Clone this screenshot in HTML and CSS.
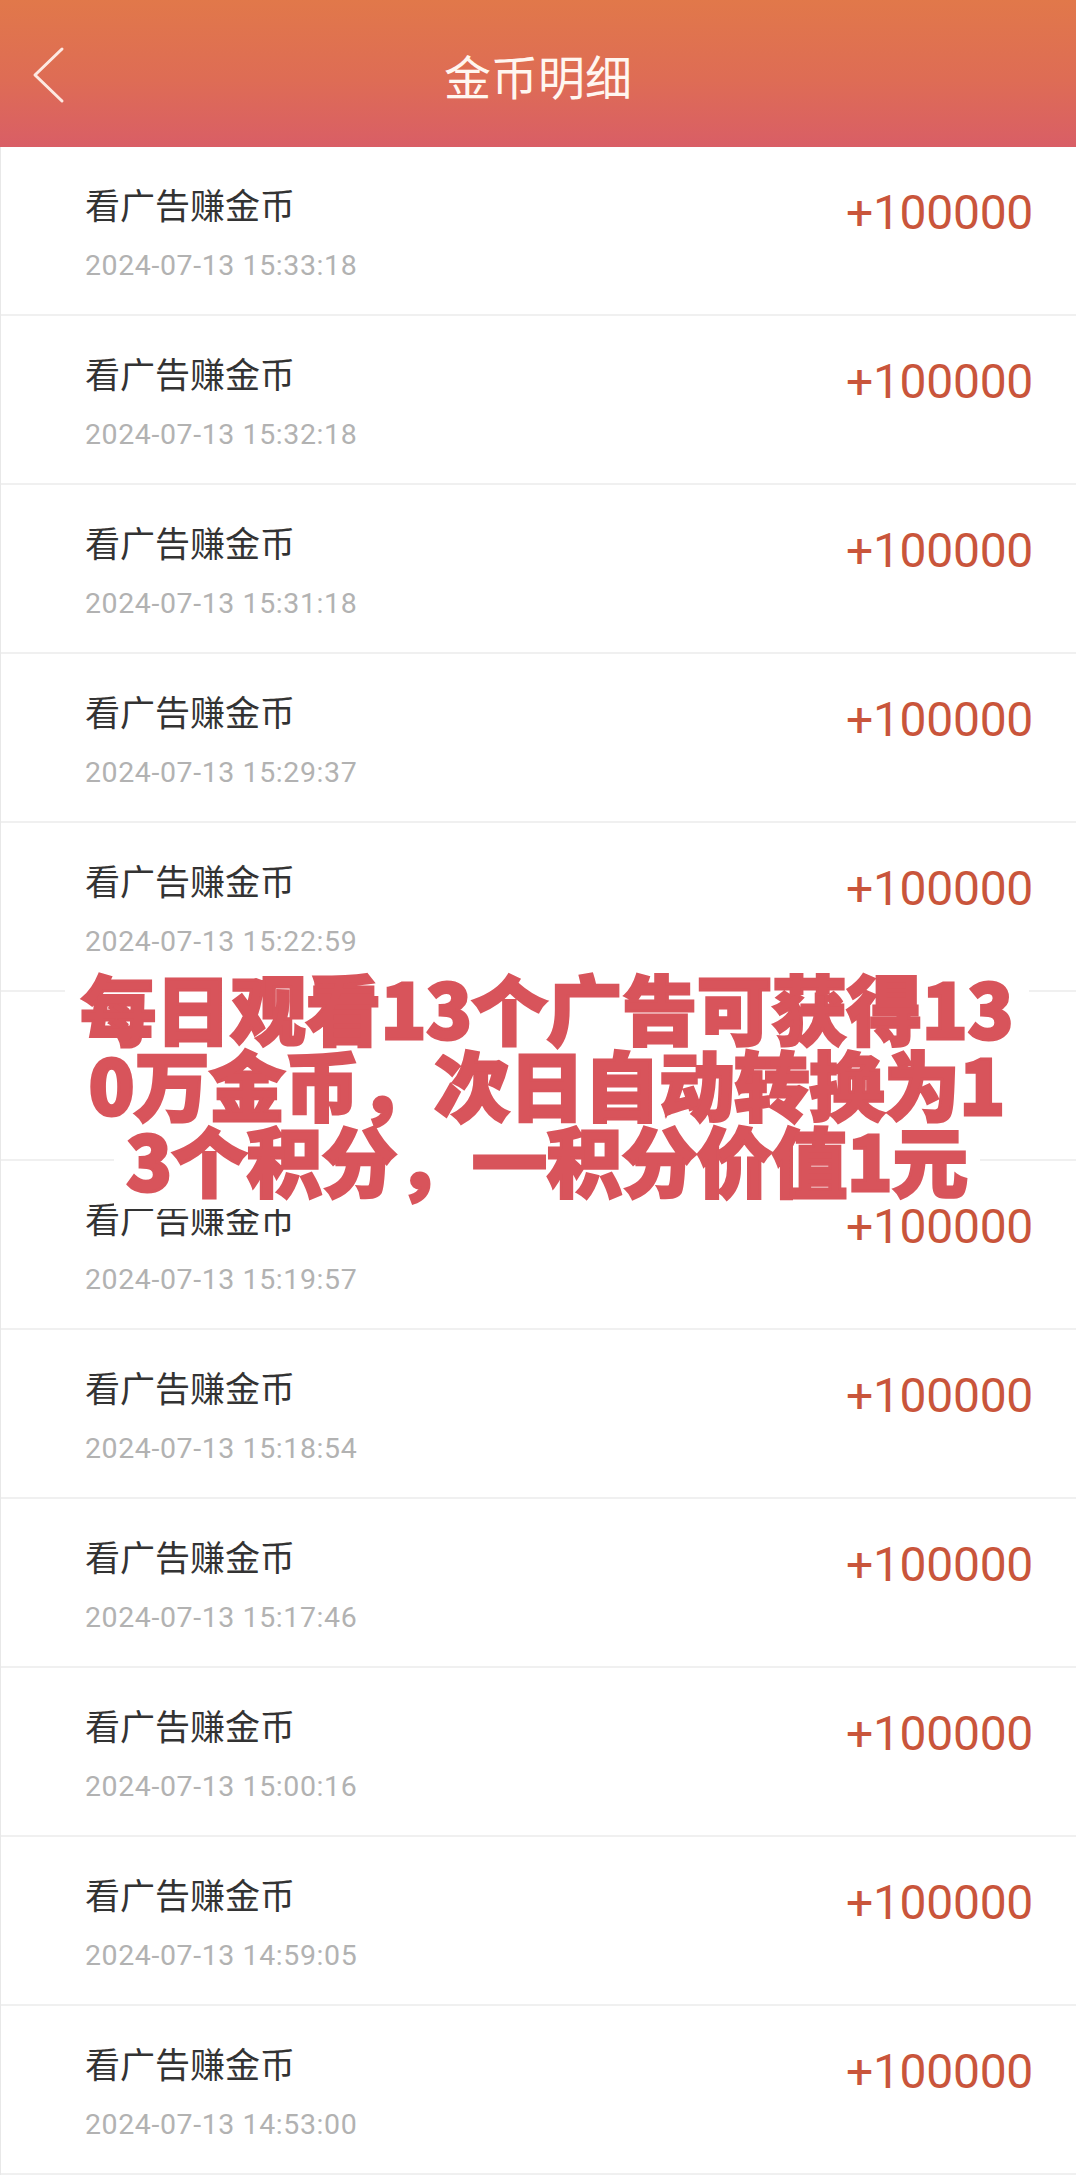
FILE: index.html
```html
<!DOCTYPE html>
<html lang="zh-CN">
<head>
    <meta charset="UTF-8">
    <meta name="viewport" content="width=device-width, initial-scale=1.0">
    <title>金币明细</title>
    <link rel="stylesheet" href="styles.css">
</head>
<body>
    <div class="page">
        <div class="top-bar">
            <div class="back">
                <svg width="34" height="60" viewBox="0 0 34 60">
                    <polyline points="30,4 3,30 30,56" fill="none" stroke="#fde9e2" stroke-width="3" stroke-linecap="round" stroke-linejoin="round"/>
                </svg>
            </div>
            <div class="title">金币明细</div>
            <div></div>
        </div>

        <div class="list">
            <div class="row">
                <div class="left"><div class="name">看广告赚金币</div><div class="time">2024-07-13 15:33:18</div></div>
                <div class="amount">+100000</div>
            </div>
            <div class="row">
                <div class="left"><div class="name">看广告赚金币</div><div class="time">2024-07-13 15:32:18</div></div>
                <div class="amount">+100000</div>
            </div>
            <div class="row">
                <div class="left"><div class="name">看广告赚金币</div><div class="time">2024-07-13 15:31:18</div></div>
                <div class="amount">+100000</div>
            </div>
            <div class="row">
                <div class="left"><div class="name">看广告赚金币</div><div class="time">2024-07-13 15:29:37</div></div>
                <div class="amount">+100000</div>
            </div>
            <div class="row">
                <div class="left"><div class="name">看广告赚金币</div><div class="time">2024-07-13 15:22:59</div></div>
                <div class="amount">+100000</div>
            </div>
            <div class="row">
                <div class="left"><div class="name">看广告赚金币</div><div class="time">2024-07-13 15:20:58</div></div>
                <div class="amount">+100000</div>
            </div>
            <div class="row">
                <div class="left"><div class="name">看广告赚金币</div><div class="time">2024-07-13 15:19:57</div></div>
                <div class="amount">+100000</div>
            </div>
            <div class="row">
                <div class="left"><div class="name">看广告赚金币</div><div class="time">2024-07-13 15:18:54</div></div>
                <div class="amount">+100000</div>
            </div>
            <div class="row">
                <div class="left"><div class="name">看广告赚金币</div><div class="time">2024-07-13 15:17:46</div></div>
                <div class="amount">+100000</div>
            </div>
            <div class="row">
                <div class="left"><div class="name">看广告赚金币</div><div class="time">2024-07-13 15:00:16</div></div>
                <div class="amount">+100000</div>
            </div>
            <div class="row">
                <div class="left"><div class="name">看广告赚金币</div><div class="time">2024-07-13 14:59:05</div></div>
                <div class="amount">+100000</div>
            </div>
            <div class="row">
                <div class="left"><div class="name">看广告赚金币</div><div class="time">2024-07-13 14:53:00</div></div>
                <div class="amount">+100000</div>
            </div>
        </div>

        <!-- 叠加的说明文字 -->
        <div class="notice">
            <div class="line first">每日观看13个广告可获得13</div>
            <div class="line mid">0万金币，次日自动转换为1</div>
            <div class="line last">3个积分，一积分价值1元</div>
        </div>
    </div>
</body>
</html>
```

FILE: styles.css
```css
body {
    margin: 0;
    background-color: #fff;
    font-family: "Noto Sans CJK SC", "Noto Sans", sans-serif;
}

.page {
    position: relative;
    width: 1076px;
    min-height: 2180px;
    background-color: #fff;
}

.top-bar {
    height: 147px;
    display: grid;
    grid-template-columns: 1fr auto 1fr;
    align-items: center;
    background: linear-gradient(180deg, #e1784a 0%, #de6c55 55%, #d95e66 100%);
}

.back {
    justify-self: start;
    margin-left: 32px;
    padding-top: 2px;
    display: flex;
}

.title {
    color: #fff6f0;
    font-size: 47px;
    line-height: 60px;
    padding-top: 2px;
}

.list {
    border-left: 1px solid #e8e8e8;
}

.row {
    height: 169px;
    box-sizing: border-box;
    border-bottom: 2px solid #f0f0f0;
    display: flex;
    justify-content: space-between;
    align-items: flex-start;
    padding: 0 43px 0 84px;
}

.left {
    padding-top: 37px;
}

.name {
    font-size: 35px;
    line-height: 40px;
    color: #333;
}

.time {
    margin-top: 25px;
    font-family: Roboto, "Liberation Sans", sans-serif;
    font-size: 28.5px;
    line-height: 34px;
    letter-spacing: 0.6px;
    color: #b2b2b2;
}

.amount {
    padding-top: 38px;
    font-family: Roboto, "Liberation Sans", sans-serif;
    font-size: 48px;
    line-height: 56px;
    letter-spacing: -0.3px;
    color: #c9553b;
}

.notice {
    position: absolute;
    top: 969px;
    left: 18px;
    right: 0;
    font-family: "Noto Sans CJK SC", sans-serif;
    font-weight: 900;
    font-size: 75px;
    line-height: 76px;
    color: #d8545b;
    -webkit-text-stroke: 3px #d8545b;
}

.notice .line {
    width: fit-content;
    margin: 0 auto;
    padding: 0 12px;
    background-color: #fff;
    white-space: nowrap;
}

.notice .first {
    padding: 0 16px 4px;
    margin-bottom: -4px;
}

.notice .mid {
    padding: 0 36px;
}

.notice .last {
    padding-bottom: 12px;
}
```
